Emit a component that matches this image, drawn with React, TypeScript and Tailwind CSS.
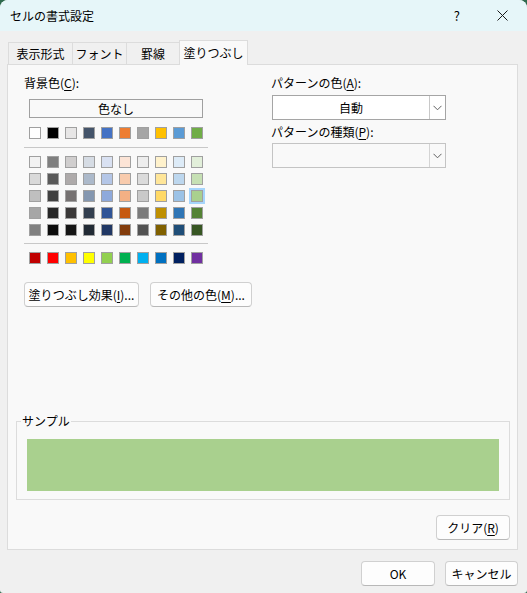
import React from 'react'

const themeRow = ['#ffffff', '#000000', '#e7e6e6', '#44546a', '#4472c4', '#ed7d31', '#a5a5a5', '#ffc000', '#5b9bd5', '#70ad47']

const tintRows = [
  ['#f2f2f2', '#7f7f7f', '#d0cece', '#d6dce4', '#d9e1f2', '#fce4d6', '#ededed', '#fff2cc', '#ddebf7', '#e2efda'],
  ['#d9d9d9', '#595959', '#aeaaaa', '#acb9ca', '#b4c6e7', '#f8cbad', '#dbdbdb', '#ffe699', '#bdd7ee', '#c6e0b4'],
  ['#bfbfbf', '#404040', '#757171', '#8497b0', '#8ea9db', '#f4b084', '#c9c9c9', '#ffd966', '#9bc2e6', '#a9d08e'],
  ['#a6a6a6', '#262626', '#3a3838', '#333f4f', '#305496', '#c65911', '#7b7b7b', '#bf8f00', '#2f75b5', '#548235'],
  ['#808080', '#0d0d0d', '#161616', '#222b35', '#203764', '#833c0c', '#525252', '#806000', '#1f4e78', '#375623'],
]

const standardRow = ['#c00000', '#ff0000', '#ffc000', '#ffff00', '#92d050', '#00b050', '#00b0f0', '#0070c0', '#002060', '#7030a0']

function Swatch({ color, selected }: { color: string; selected?: boolean }) {
  return (
    <div
      className={
        selected
          ? 'w-3 h-3 border border-[#a0a0a0] shadow-[0_0_0_2px_#a6d5fb]'
          : 'w-3 h-3 border border-[#a0a0a0]'
      }
      style={{ backgroundColor: color }}
    />
  )
}

function SwatchRow({ colors, selectedIndex }: { colors: string[]; selectedIndex?: number }) {
  return (
    <div className="flex gap-[6px] ml-[5px]">
      {colors.map((c, i) => (
        <Swatch key={i} color={c} selected={i === selectedIndex} />
      ))}
    </div>
  )
}

function Chevron() {
  return (
    <svg width="9" height="6" viewBox="0 0 9 6" fill="none">
      <path d="M0.5 0.8 L4.5 4.8 L8.5 0.8" stroke="#606060" strokeWidth="1" />
    </svg>
  )
}

function WinButton({ children, className }: { children: React.ReactNode; className: string }) {
  return (
    <div
      className={`flex items-center justify-center h-[25px] rounded-[4px] border border-[#d0d0d0] border-b-[#b8b8b8] bg-[#fdfdfd] text-[12px] leading-[16px] ${className}`}
    >
      {children}
    </div>
  )
}

export default function App() {
  return (
    <div className="w-[527px] h-[593px] bg-[#2f6a4e] font-['Noto_Sans_CJK_JP','Noto_Sans',sans-serif] text-black">
      <div className="h-full flex flex-col rounded-t-[8px] rounded-b-[3px] overflow-hidden bg-[#f0f0f0]">
        {/* Title bar */}
        <div className="h-[31px] flex items-center bg-[#e6f6f9] pl-[10px] text-[12px] leading-[16px]">
          <span>セルの書式設定</span>
          <span className="ml-auto mr-[37px] text-[13px]">?</span>
          <svg width="11" height="11" viewBox="0 0 11 11" className="mr-[19px]">
            <path d="M0.5 0.5 L10.5 10.5 M10.5 0.5 L0.5 10.5" stroke="#1a1a1a" strokeWidth="1" />
          </svg>
        </div>

        {/* Tabs */}
        <div className="flex items-end h-[24px] mt-[9px] ml-[8px] text-[12px] leading-[16px]">
          <div className="w-[64px] h-[22px] flex items-center justify-center border-l border-t border-[#dcdcdc]">表示形式</div>
          <div className="w-[54px] h-[22px] flex items-center justify-center border-l border-t border-[#dcdcdc]">フォント</div>
          <div className="w-[53px] h-[22px] flex items-center justify-center border-l border-t border-[#dcdcdc]">罫線</div>
          <div className="relative z-10 w-[69px] h-[25px] -mb-px flex items-center justify-center border-l border-t border-r border-[#dcdcdc] bg-[#f9f9f9]">
            塗りつぶし
          </div>
        </div>

        {/* Panel */}
        <div className="ml-[7px] w-[511px] h-[486px] border border-[#dcdcdc] bg-[#f9f9f9] flex flex-col text-[12px] leading-[16px]">
          <div className="flex pt-[10px]">
            {/* Left column */}
            <div className="w-[263px] pl-[16px] flex flex-col">
              <div className="h-[16px]">
                背景色(<span className="underline underline-offset-2">C</span>):
              </div>
              <div className="mt-[8px] ml-[5px] w-[174px] h-[19px] flex items-center justify-center border border-[#a0a0a0]">
                色なし
              </div>
              <div className="mt-[9px]">
                <SwatchRow colors={themeRow} />
              </div>
              <div className="mt-[8px] w-[184px] h-px bg-[#c8c8c8]" />
              <div className="mt-[8px] flex flex-col gap-[5px]">
                {tintRows.map((row, i) => (
                  <SwatchRow key={i} colors={row} selectedIndex={i === 2 ? 9 : undefined} />
                ))}
              </div>
              <div className="mt-[7px] w-[184px] h-px bg-[#c8c8c8]" />
              <div className="mt-[8px]">
                <SwatchRow colors={standardRow} />
              </div>
              <div className="mt-[18px] flex gap-[11px]">
                <WinButton className="w-[115px] h-[24px]">
                  塗りつぶし効果(<span className="underline underline-offset-2">I</span>)...
                </WinButton>
                <WinButton className="w-[102px] h-[24px]">
                  その他の色(<span className="underline underline-offset-2">M</span>)...
                </WinButton>
              </div>
            </div>

            {/* Right column */}
            <div className="w-[176px] flex flex-col">
              <div className="h-[16px]">
                パターンの色(<span className="underline underline-offset-2">A</span>):
              </div>
              <div className="mt-[4px] ml-px w-[174px] h-[25px] flex border border-[#a5a5a5] bg-white">
                <div className="flex-1 flex items-center justify-center">自動</div>
                <div className="w-[16px] border-l border-[#c8c8c8] flex items-center justify-center">
                  <Chevron />
                </div>
              </div>
              <div className="mt-[4px] h-[16px]">
                パターンの種類(<span className="underline underline-offset-2">P</span>):
              </div>
              <div className="mt-[3px] ml-px w-[174px] h-[25px] flex border border-[#c4c4c4] bg-[#f9f9f9]">
                <div className="flex-1" />
                <div className="w-[16px] border-l border-[#d4d4d4] flex items-center justify-center">
                  <Chevron />
                </div>
              </div>
            </div>
          </div>

          {/* Sample */}
          <fieldset className="mt-auto ml-[8px] w-[494px] border border-[#dcdcdc]">
            <legend className="ml-[4px] px-[1px] leading-[16px]">サンプル</legend>
            <div className="mt-[10px] mx-[10px] mb-[8px] h-[52px] bg-[#a9d08e]" />
          </fieldset>

          <div className="mt-[15px] mb-[9px] mr-[7px] flex justify-end">
            <WinButton className="w-[74px]">
              クリア(<span className="underline underline-offset-2">R</span>)
            </WinButton>
          </div>
        </div>

        {/* Dialog buttons */}
        <div className="mt-[11px] pr-[9px] flex justify-end gap-[10px]">
          <WinButton className="w-[74px] h-[24px] border-[#0067c0] border-b-[#0067c0]">OK</WinButton>
          <WinButton className="w-[73px] h-[24px]">キャンセル</WinButton>
        </div>
      </div>
    </div>
  )
}
